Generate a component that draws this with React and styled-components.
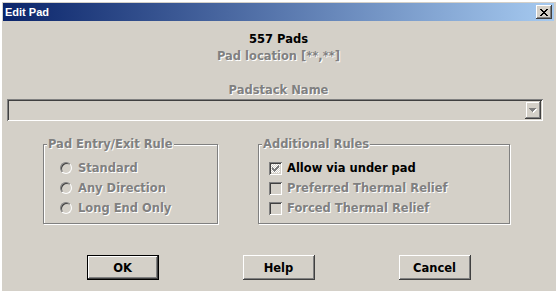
import React from 'react';
import styled, { createGlobalStyle } from 'styled-components';

const FACE = '#d4d0c8';
const SHADOW = '#808080';
const DARK = '#404040';

const GlobalStyle = createGlobalStyle`
  html, body {
    margin: 0;
    padding: 0;
    background: ${FACE};
  }
  body {
    font-family: "DejaVu Sans", sans-serif;
  }
`;

const Window = styled.div`
  width: 556px;
  height: 291px;
  box-sizing: border-box;
  padding: 3px 2px 0 3px;
  background: ${FACE};
  box-shadow: inset 2px 2px 0 #fff, inset 1px 1px 0 ${FACE};
  display: flex;
  flex-direction: column;
  overflow: hidden;
`;

const TitleBar = styled.div`
  height: 18px;
  flex: none;
  display: flex;
  align-items: center;
  justify-content: space-between;
  padding: 0 2px;
  background: linear-gradient(to right, #0a246a, #a6caf0);
`;

const TitleText = styled.span`
  color: #fff;
  font: bold 11px "Liberation Sans", sans-serif;
  line-height: 18px;
  margin-top: -1px;
`;

const CloseButton = styled.div`
  width: 16px;
  height: 14px;
  background: ${FACE};
  box-shadow: inset -1px -1px 0 ${DARK}, inset 1px 1px 0 #fff,
    inset -2px -2px 0 ${SHADOW}, inset 2px 2px 0 ${FACE};
  display: flex;
  align-items: center;
  justify-content: center;
`;

const Body = styled.div`
  flex: 1;
  display: flex;
  flex-direction: column;
  align-items: center;
  padding-top: 10px;
`;

const Caption = styled.div`
  font: bold 11.5px "DejaVu Sans", sans-serif;
  line-height: 17px;
  margin-top: ${({ $gap }) => $gap || 0}px;
  color: ${({ $disabled }) => ($disabled ? SHADOW : '#000')};
  text-shadow: ${({ $disabled }) => ($disabled ? '1px 1px 0 #fff' : 'none')};
`;

const Combo = styled.div`
  align-self: flex-start;
  margin-left: 4px;
  width: 536px;
  height: 22px;
  box-sizing: border-box;
  padding: 2px;
  display: flex;
  justify-content: flex-end;
  background: ${FACE};
  box-shadow: inset 1px 1px 0 ${SHADOW}, inset -1px -1px 0 #fff,
    inset 2px 2px 0 ${DARK}, inset -2px -2px 0 ${FACE};
`;

const DropButton = styled.div`
  width: 16px;
  height: 18px;
  background: ${FACE};
  box-shadow: inset -1px -1px 0 ${DARK}, inset 1px 1px 0 ${FACE},
    inset -2px -2px 0 ${SHADOW}, inset 2px 2px 0 #fff;
  display: flex;
  align-items: center;
  justify-content: center;
`;

const GroupRow = styled.div`
  align-self: stretch;
  display: flex;
  gap: 40px;
  padding-left: 40px;
  margin-top: 16px;
`;

const GroupBox = styled.fieldset`
  margin: 0;
  padding: 7px 0 0 3px;
  min-width: 0;
  width: ${({ $width }) => $width}px;
  height: 87px;
  box-sizing: border-box;
  border: 1px solid ${SHADOW};
  box-shadow: inset 1px 1px 0 #fff, 1px 1px 0 #fff;
`;

const Legend = styled.legend`
  margin: 0;
  padding: 0 1px;
  background: ${FACE};
  font: bold 11.5px "DejaVu Sans", sans-serif;
  line-height: 14px;
  color: ${SHADOW};
  text-shadow: 1px 1px 0 #fff;
`;

const OptionList = styled.div`
  display: flex;
  flex-direction: column;
  padding-left: ${({ $indent }) => $indent}px;
`;

const OptionRow = styled.div`
  height: 20px;
  display: flex;
  align-items: center;
  gap: ${({ $gap }) => $gap}px;
`;

const Radio = styled.span`
  width: 12px;
  height: 12px;
  box-sizing: border-box;
  border-radius: 50%;
  border: 1px solid;
  border-color: ${SHADOW} #fff #fff ${SHADOW};
  box-shadow: inset 1px 1px 0 ${DARK}, inset -1px -1px 0 ${FACE};
  background: ${FACE};
  flex: none;
`;

const Checkbox = styled.span`
  width: 13px;
  height: 13px;
  box-sizing: border-box;
  flex: none;
  display: flex;
  align-items: center;
  justify-content: center;
  box-shadow: inset 1px 1px 0 ${SHADOW}, inset -1px -1px 0 #fff,
    inset 2px 2px 0 ${DARK}, inset -2px -2px 0 ${FACE};
  background: ${({ $checked }) =>
    $checked
      ? `repeating-conic-gradient(#fff 0 25%, ${FACE} 0 50%) 0 0 / 2px 2px`
      : FACE};
`;

const OptionLabel = styled.span`
  font: bold 11.5px "DejaVu Sans", sans-serif;
  line-height: 20px;
  white-space: nowrap;
  color: ${({ $disabled }) => ($disabled ? SHADOW : '#000')};
  text-shadow: ${({ $disabled }) => ($disabled ? '1px 1px 0 #fff' : 'none')};
`;

const ButtonRow = styled.div`
  align-self: stretch;
  display: flex;
  justify-content: center;
  gap: 84px;
  margin-top: 31px;
`;

const Button = styled.button`
  width: 72px;
  height: 25px;
  box-sizing: border-box;
  padding: 0;
  margin: 0;
  border: ${({ $default }) => ($default ? '1px solid #000' : 'none')};
  background: ${FACE};
  box-shadow: inset -1px -1px 0 ${DARK}, inset 1px 1px 0 #fff,
    inset -2px -2px 0 ${SHADOW}, inset 2px 2px 0 ${FACE};
  font: bold 11.5px "DejaVu Sans", sans-serif;
  color: #000;
`;

// tiny pixel bitmaps, drawn 1:1
function Bitmap({ rows, color, width, height }) {
  const rects = [];
  rows.forEach((row, y) => {
    [...row].forEach((c, x) => {
      if (c === 'X') rects.push(<rect key={`${x}-${y}`} x={x} y={y} width="1" height="1" />);
    });
  });
  return (
    <svg width={width} height={height} viewBox={`0 0 ${width} ${height}`} fill={color} shapeRendering="crispEdges">
      {rects}
    </svg>
  );
}

const CLOSE = ['XX....XX', '.XX..XX.', '..XXXX..', '...XX...', '..XXXX..', '.XX..XX.', 'XX....XX'];
const CHECK = ['......X', '.....XX', 'X...XXX', 'XX.XXX.', 'XXXXX..', '.XXX...', '..X....'];

function Arrow() {
  return (
    <svg width="8" height="5" viewBox="0 0 8 5" shapeRendering="crispEdges">
      <path d="M1 1h7v1h-1v1h-1v1h-1v1h-1v-1h-1v-1h-1v-1h-1z" fill="#fff" />
      <path d="M0 0h7v1h-1v1h-1v1h-1v1h-1v-1h-1v-1h-1v-1h-1z" fill={SHADOW} />
    </svg>
  );
}

const entryRules = ['Standard', 'Any Direction', 'Long End Only'];
const extraRules = [
  { label: 'Allow via under pad', checked: true, enabled: true },
  { label: 'Preferred Thermal Relief' },
  { label: 'Forced Thermal Relief' },
];

export default function App() {
  return (
    <>
      <GlobalStyle />
      <Window>
        <TitleBar>
          <TitleText>Edit Pad</TitleText>
          <CloseButton>
            <Bitmap rows={CLOSE} color="#000" width={8} height={7} />
          </CloseButton>
        </TitleBar>
        <Body>
          <Caption>557 Pads</Caption>
          <Caption $disabled>Pad location [**,**]</Caption>
          <Caption $disabled $gap={17}>Padstack Name</Caption>
          <Combo>
            <DropButton>
              <Arrow />
            </DropButton>
          </Combo>
          <GroupRow>
            <GroupBox $width={175}>
              <Legend>Pad Entry/Exit Rule</Legend>
              <OptionList $indent={13}>
                {entryRules.map((rule) => (
                  <OptionRow key={rule} $gap={6}>
                    <Radio />
                    <OptionLabel $disabled>{rule}</OptionLabel>
                  </OptionRow>
                ))}
              </OptionList>
            </GroupBox>
            <GroupBox $width={252}>
              <Legend>Additional Rules</Legend>
              <OptionList $indent={7}>
                {extraRules.map((rule) => (
                  <OptionRow key={rule.label} $gap={5}>
                    <Checkbox $checked={rule.checked}>
                      {rule.checked && <Bitmap rows={CHECK} color={SHADOW} width={7} height={7} />}
                    </Checkbox>
                    <OptionLabel $disabled={!rule.enabled}>{rule.label}</OptionLabel>
                  </OptionRow>
                ))}
              </OptionList>
            </GroupBox>
          </GroupRow>
          <ButtonRow>
            <Button $default>OK</Button>
            <Button>Help</Button>
            <Button>Cancel</Button>
          </ButtonRow>
        </Body>
      </Window>
    </>
  );
}
